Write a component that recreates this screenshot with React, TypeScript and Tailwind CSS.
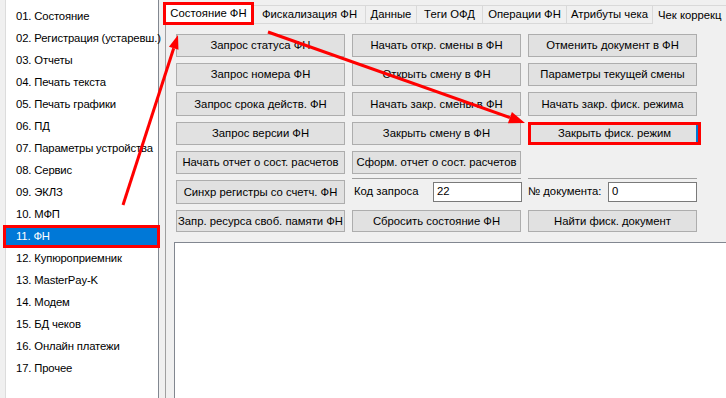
import React from 'react';

const MENU = [
  '01. Состояние',
  '02. Регистрация (устаревш.)',
  '03. Отчеты',
  '04. Печать текста',
  '05. Печать графики',
  '06. ПД',
  '07. Параметры устройства',
  '08. Сервис',
  '09. ЭКЛЗ',
  '10. МФП',
  '11. ФН',
  '12. Купюроприемник',
  '13. MasterPay-K',
  '14. Модем',
  '15. БД чеков',
  '16. Онлайн платежи',
  '17. Прочее',
];

const TABS = [
  { name: 'Фискализация ФН', w: 'w-[112px]' },
  { name: 'Данные', w: 'w-[51px]' },
  { name: 'Теги ОФД', w: 'w-[66px]' },
  { name: 'Операции ФН', w: 'w-[84px]' },
  { name: 'Атрибуты чека', w: 'w-[86px]' },
];

function Btn({ children, className = '' }: { children?: React.ReactNode; className?: string }) {
  return (
    <div
      className={`h-full bg-[#e1e1e1] border border-[#adadad] flex items-center justify-center whitespace-nowrap ${className}`}
    >
      {children}
    </div>
  );
}

export default function App() {
  return (
    <div
      className="relative w-[726px] h-[398px] overflow-hidden bg-[#f0f0f0] flex text-[11.3px] text-black"
      style={{ fontFamily: '"Liberation Sans", Arial, sans-serif' }}
    >
      {/* left menu list */}
      <div className="pl-[5px] h-full">
        <div className="w-[154px] h-full bg-white border-l border-[#dcdcdc] border-r border-r-[#828790] pt-[5px] tracking-[-0.15px]">
          {MENU.map((item, i) =>
            i === 10 ? (
              <div key={item} className="relative h-[22px] flex items-center">
                <div className="absolute left-[-3px] right-[-2px] top-0 bottom-[-1px] border-[3px] border-[#ff0000] bg-[#0078d7]" />
                <span className="relative pl-[10px] text-white">{item}</span>
              </div>
            ) : (
              <div key={item} className="h-[22px] flex items-center pl-[10px] whitespace-nowrap">
                {item}
              </div>
            )
          )}
        </div>
      </div>

      {/* right side: tabs */}
      <div className="flex-1 flex flex-col pl-[4px] min-w-0">
        <div className="flex items-end h-[25px] pt-[2px]">
          <div className="w-[91px] shrink-0 h-[23px] bg-white border-[3px] border-[#ff0000] flex items-center justify-center whitespace-nowrap">
            Состояние ФН
          </div>
          {TABS.map(t => (
            <div
              key={t.name}
              className={`${t.w} shrink-0 h-[19px] mb-[1px] border border-l-0 border-[#d9d9d9] flex items-center justify-center whitespace-nowrap`}
            >
              {t.name}
            </div>
          ))}
          <div className="flex-1 min-w-0 h-[19px] mb-[1px] border-t border-[#d9d9d9] flex items-center pl-[5px] whitespace-nowrap overflow-hidden">
            Чек коррекц
          </div>
        </div>

        <div className="flex-1 flex flex-col border-l border-[#a0a0a0] ml-[2px]">
          {/* buttons */}
          <div className="pl-[10px] pt-[9px]">
            <div className="grid grid-cols-[169px_169px_169px] gap-x-[7px] gap-y-[6px] grid-rows-[23px_23px_24px_23px_23px_24px_22px]">
              <Btn>Запрос статуса ФН</Btn>
              <Btn>Начать откр. смены в ФН</Btn>
              <Btn>Отменить документ в ФН</Btn>

              <Btn>Запрос номера ФН</Btn>
              <Btn>Открыть смену в ФН</Btn>
              <Btn>Параметры текущей смены</Btn>

              <Btn>Запрос срока действ. ФН</Btn>
              <Btn>Начать закр. смены в ФН</Btn>
              <Btn>Начать закр. фиск. режима</Btn>

              <Btn>Запрос версии ФН</Btn>
              <Btn>Закрыть смену в ФН</Btn>
              <Btn className="w-[173px] border-[3px] border-[#ff0000] shadow-[inset_-2px_0_0_#0078d7]">
                Закрыть фиск. режим
              </Btn>

              <Btn>Начать отчет о сост. расчетов</Btn>
              <Btn>Сформ. отчет о сост. расчетов</Btn>
              <div />

              <Btn>Синхр регистры со счетч. ФН</Btn>
              <div className="-mt-[2px] border-t border-[#a0a0a0] pl-[2px] flex items-center justify-between">
                <span>Код запроса</span>
                <div className="w-[89px] h-[20px] bg-white border border-[#7a7a7a] pl-[3px] flex items-center -mr-[1px]">22</div>
              </div>
              <div className="-mt-[2px] border-t border-[#a0a0a0] flex items-center justify-between">
                <span>№ документа:</span>
                <div className="w-[89px] h-[20px] bg-white border border-[#7a7a7a] pl-[3px] flex items-center">0</div>
              </div>

              <Btn>Запр. ресурса своб. памяти ФН</Btn>
              <Btn>Сбросить состояние ФН</Btn>
              <Btn>Найти фиск. документ</Btn>
            </div>
          </div>

          {/* memo */}
          <div className="flex-1 mt-[10px] ml-[8px] bg-white border-t border-l border-[#828790]" />
        </div>
      </div>

      {/* annotation arrows */}
      <svg className="absolute inset-0 pointer-events-none" width="726" height="398" viewBox="0 0 726 398">
        <line x1="123" y1="205" x2="173.7" y2="48.3" stroke="#ff0000" strokeWidth="3" />
        <polygon points="178,35 178.45,49.84 168.95,46.76" fill="#ff0000" />
        <line x1="268" y1="32" x2="509.9" y2="117.66" stroke="#ff0000" strokeWidth="3" />
        <polygon points="525,123 507.9,123.3 511.9,112" fill="#ff0000" />
      </svg>
    </div>
  );
}
